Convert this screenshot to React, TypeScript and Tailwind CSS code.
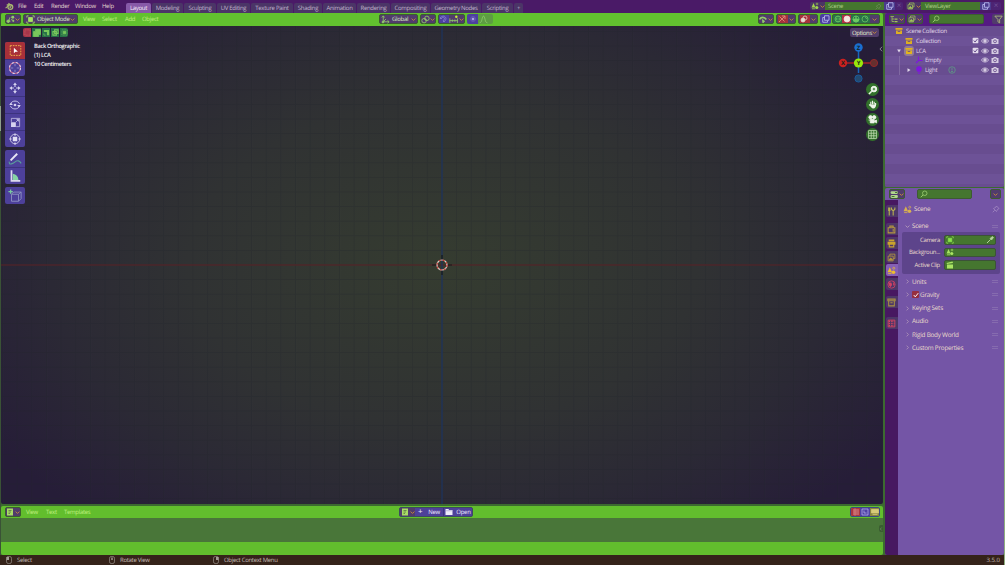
import { ReactNode } from 'react';
import clsx from 'clsx';

interface IconProps {
  className?: string;
}

function Svg({ className, children }: { className?: string; children: ReactNode }) {
  return (
    <svg viewBox="0 0 16 16" className={clsx('shrink-0', className ?? 'size-[9px]')} fill="none" stroke="currentColor" strokeWidth="1.5">
      {children}
    </svg>
  );
}

const Chevron = ({ className = 'size-[5px] text-[#c58a3a]' }: IconProps) => (
  <Svg className={className}><path d="M2 5l6 6 6-6" strokeWidth="3" /></Svg>
);

const ChevronRight = ({ className = 'size-[5px] text-[#b39abb]' }: IconProps) => (
  <Svg className={className}><path d="M5 2l6 6-6 6" strokeWidth="2.5" /></Svg>
);

const BlenderLogo = () => (
  <Svg className="size-[9px] text-[#a8b870]">
    <path d="M1 11l7-6H3M6 2l7 5.5" strokeWidth="2" />
    <circle cx="9.5" cy="9" r="4.3" strokeWidth="2.2" />
    <circle cx="9.5" cy="9" r="1.2" fill="currentColor" />
  </Svg>
);

const SceneIcon = ({ className }: IconProps) => (
  <Svg className={className}>
    <path d="M5 2l4 9H1z" fill="currentColor" stroke="none" />
    <circle cx="11.5" cy="11" r="3.2" fill="currentColor" stroke="none" />
    <path d="M2 13.5h6" />
    <circle cx="12" cy="4" r="1.8" strokeWidth="1.2" />
  </Svg>
);

const LayersIcon = ({ className }: IconProps) => (
  <Svg className={className}>
    <path d="M5 5V2h9v8h-3" />
    <path d="M2 5.5h9V14H2z" />
    <path d="M3.5 12.5l3-4 3.5 4z" fill="currentColor" />
  </Svg>
);

const CopyIcon = ({ className = 'size-[8px] text-[#b5b5ec]' }: IconProps) => (
  <Svg className={className}><path d="M5 1.5h9v9H5zM5 5H1.5v9.5H11V11" strokeWidth="1.8" /></Svg>
);

const PinIcon = ({ className }: IconProps) => (
  <Svg className={className}><path d="M9 2l5 5-2 1-2 3-1 2-6-6 2-1 3-2zM5.500 10.500L1.500 14.500" /></Svg>
);

const SearchIcon = ({ className = 'size-[8px] text-[#93c56b]' }: IconProps) => (
  <Svg className={className}><circle cx="9.5" cy="6.500" r="4.500" strokeWidth="1.8" /><path d="M6 10l-4.500 4.500" strokeWidth="2" /></Svg>
);

const EditorIcon = ({ className = 'size-[9px] text-[#94cb6b]' }: IconProps) => (
  <Svg className={className}>
    <path d="M1 11h7M4 14l3-10M9 8l5 2" />
    <circle cx="4" cy="11" r="2.200" fill="currentColor" />
    <circle cx="12" cy="4" r="2.600" fill="currentColor" stroke="none" />
    <circle cx="13" cy="10.500" r="1.200" fill="currentColor" />
  </Svg>
);

const ObjectIcon = ({ className = 'size-[9px] text-[#a9e463]' }: IconProps) => (
  <Svg className={className}>
    <path d="M4.500 4.500h7v7h-7z" fill="currentColor" />
    <path d="M1.500 4.500v-3h3M11.500 1.500h3v3M14.500 11.500v3h-3M4.500 14.500h-3v-3" />
  </Svg>
);

const AxesIcon = () => (
  <Svg className="size-[9px] text-[#94cb6b]">
    <path d="M4 2v10h10M4 12l5-5M1.500 4.500L4 1.500l2.500 3M11.500 9.500L14.500 12l-3 2.500" />
    <circle cx="3.500" cy="12.500" r="1.600" fill="currentColor" />
  </Svg>
);

const PivotIcon = () => (
  <Svg className="size-[9px] text-[#94cb6b]">
    <circle cx="5.500" cy="10" r="4" /><circle cx="10.500" cy="6" r="4" /><circle cx="8" cy="8" r="1" fill="currentColor" />
  </Svg>
);

const MagnetIcon = () => (
  <Svg className="size-[8px] text-[#8f8ad8]">
    <path d="M2 6l4-3c5-3 10 3 7 7l-3 4-2-2 2.500-3.500c1.500-3-1-5-3.500-3.500L4 8z" />
  </Svg>
);

const SnapIcon = () => (
  <Svg className="size-[9px] text-[#94cb6b]">
    <path d="M1.500 6v8M6 8v4M10.500 8v4M15 6v8M1 10h14" /><circle cx="13" cy="3" r="2.200" fill="#c9ea3e" stroke="none" />
  </Svg>
);

const EyeIcon = ({ className = 'size-[8px] text-[#d6cbe2]' }: IconProps) => (
  <Svg className={className}>
    <path d="M.8 8C4 2.500 12 2.500 15.200 8 12 13.500 4 13.500.8 8z" strokeWidth="1.600" /><circle cx="8" cy="8" r="2.700" fill="currentColor" />
  </Svg>
);

const CameraIcon = ({ className = 'size-[8px] text-[#d6cbe2]' }: IconProps) => (
  <Svg className={className}>
    <path d="M1 4h3.500l1-2h5l1 2H15v10H1z" fill="currentColor" stroke="none" />
    <circle cx="8" cy="8.700" r="2.900" stroke="#5a3f80" />
  </Svg>
);

const CheckIcon = ({ className = 'size-[7px] text-[#e2d9ec]' }: IconProps) => (
  <Svg className={className}>
    <rect x="1.500" y="1.500" width="13" height="13" rx="2" fill="currentColor" stroke="none" />
    <path d="M4 8l3 3.500 5.500-7" stroke="#5c4386" strokeWidth="2" />
  </Svg>
);

const BoxIcon = ({ className }: IconProps) => (
  <Svg className={className}>
    <path d="M1 2h14v3.500H1zM2 7h12v7H2z" fill="currentColor" stroke="none" /><path d="M5.500 9h5" stroke="#5c4386" />
  </Svg>
);

const TextIcon = () => (
  <Svg className="size-[8px] text-[#a9dc66]">
    <path d="M2 1h12v14H2z" fill="currentColor" stroke="none" /><path d="M5 5h6M5 8h5M5 11h3" stroke="#55703f" />
  </Svg>
);

const SphereIcon = ({ className = 'size-[8px]', fill = 'none', wire = false }: IconProps & { fill?: string; wire?: boolean }) => (
  <Svg className={className}>
    <circle cx="8" cy="8" r="6" fill={fill} />
    {wire && <path d="M2 8h12M8 2c-4 4-4 8 0 12M8 2c4 4 4 8 0 12" strokeWidth="1.200" />}
  </Svg>
);

const MouseIcon = ({ side }: { side: 'left' | 'middle' | 'right' }) => (
  <Svg className="size-[8px] text-[#a39b94]">
    <rect x="3" y="1" width="10" height="14" rx="3.500" strokeWidth="1.300" />
    {side === 'left' && <path d="M3 2h5v6H3z" fill="currentColor" stroke="none" />}
    {side === 'middle' && <path d="M8 3v5" strokeWidth="3" />}
    {side === 'right' && <path d="M8 2h5v6H8z" fill="currentColor" stroke="none" />}
  </Svg>
);

const btn = 'flex shrink-0 items-center justify-around h-[10px] rounded-[2px] bg-[#513c6c] border border-[#3d5b31]';
const green = 'flex shrink-0 items-center bg-[#45762f] text-[#b1d08a]';

const tabs = [
  { name: 'Layout', width: 'w-[26px]' },
  { name: 'Modeling', width: 'w-[32px]' },
  { name: 'Sculpting', width: 'w-[33px]' },
  { name: 'UV Editing', width: 'w-[34px]' },
  { name: 'Texture Paint', width: 'w-[43px]' },
  { name: 'Shading', width: 'w-[29px]' },
  { name: 'Animation', width: 'w-[34px]' },
  { name: 'Rendering', width: 'w-[34px]' },
  { name: 'Compositing', width: 'w-[40px]' },
  { name: 'Geometry Nodes', width: 'w-[51px]' },
  { name: 'Scripting', width: 'w-[32px]' },
  { name: '+', width: 'w-[10px]' },
];

function TopBar() {
  return (
    <div className="flex h-[13px] items-center bg-[#4a1a67] pl-[5px] text-[#d2c6d8]">
      <div className="mb-px"><BlenderLogo /></div>
      <div className="mb-px ml-[4px] flex w-[108px] text-[#e2d6cf]">
        <span className="w-[16px]">File</span>
        <span className="w-[17px]">Edit</span>
        <span className="w-[24px]">Render</span>
        <span className="w-[27px]">Window</span>
        <span>Help</span>
      </div>
      <div className="flex items-end self-end">
        {tabs.map((tab, i) => (
          <div key={tab.name} className={clsx('h-[10px] pr-px', tab.width)}>
            <div className={clsx('flex h-full items-center justify-center rounded-t-[2px]', i === 0 ? 'bg-[#875aa8] text-[#f6f0fa]' : 'bg-[#4b3567] text-[#c2b5cd]')}>
              {tab.name}
            </div>
          </div>
        ))}
      </div>
      <div className="mb-px ml-auto mr-[3px] flex h-[8px] items-center">
        <div className="flex h-full w-[15px] items-center justify-around rounded-l-[2px] bg-[#4b3565]">
          <SceneIcon className="size-[8px] text-[#a2d64e]" /><Chevron />
        </div>
        <div className={clsx(green, 'h-full w-[59px] justify-between pl-[3px] pr-[2px]')}>Scene <PinIcon className="size-[7px] text-[#71905b]" /></div>
        <div className="flex h-full w-[11px] items-center justify-center bg-[#4a3b8e]"><CopyIcon /></div>
        <div className="flex h-full w-[8px] items-center justify-center rounded-r-[2px] bg-[#4c2473] text-[8px] text-[#725398]">×</div>
        <div className="ml-[3px] flex h-full w-[15px] items-center justify-around rounded-l-[2px] bg-[#4b3565]">
          <LayersIcon className="size-[8px] text-[#a2c65a]" /><Chevron />
        </div>
        <div className={clsx(green, 'h-full w-[59px] pl-[4px]')}>ViewLayer</div>
        <div className="flex h-full w-[11px] items-center justify-center bg-[#4a3b8e]"><CopyIcon /></div>
        <div className="flex h-full w-[10px] items-center justify-center rounded-r-[2px] bg-[#4c2473] text-[8px] text-[#725398]">×</div>
      </div>
    </div>
  );
}

function ViewportHeader() {
  return (
    <div className="flex h-[13px] items-center rounded-t-[2px] bg-[#62c12f] pb-px pl-[4px] text-[#c0f080]">
      <div className={clsx(btn, 'w-[16px]')}><EditorIcon /><Chevron /></div>
      <div className={clsx(btn, 'ml-[2px] w-[55px] px-[2px] text-[#dcebc5]')}>
        <ObjectIcon /><span className="ml-[2px] mr-auto">Object Mode</span><Chevron />
      </div>
      <span className="ml-[5px] w-[19px]">View</span>
      <span className="w-[23px]">Select</span>
      <span className="w-[17px]">Add</span>
      <span className="w-[237px]">Object</span>
      <div className={clsx(btn, 'w-[39px] px-px text-[#dcebc5]')}>
        <AxesIcon /><span className="ml-[2px] mr-auto">Global</span><Chevron />
      </div>
      <div className={clsx(btn, 'ml-[2px] w-[16px]')}><PivotIcon /><Chevron /></div>
      <div className={clsx(btn, 'ml-[2px] w-[27px] overflow-hidden')}>
        <div className="flex h-full w-[10px] items-center bg-[#4d40a0]"><MagnetIcon /></div>
        <SnapIcon /><Chevron />
      </div>
      <div className="ml-[2px] flex h-[10px] w-[26px] items-center overflow-hidden rounded-[2px] bg-[#5d9d43]">
        <div className="flex h-full w-[11px] items-center justify-center bg-[#4d40a0] text-[#b4b0ee]">
          <Svg className="size-[8px]"><circle cx="8" cy="8" r="5" strokeOpacity=".3" /><circle cx="8" cy="8" r="2" fill="currentColor" /></Svg>
        </div>
        <Svg className="ml-px size-[9px] text-[#8fcf6c]"><path d="M1 14c5 0 4-12 7-12s2 12 7 12" /></Svg>
      </div>
      <div className={clsx(btn, 'ml-auto w-[16px]')}>
        <Svg className="size-[9px] text-[#94cb6b]"><path d="M1 8c2-5 9-5 12 0" strokeWidth="3" /><path d="M6 8l1 6 3-3z" fill="currentColor" /></Svg><Chevron />
      </div>
      <div className={clsx(btn, 'ml-[2px] w-[20px] overflow-hidden')}>
        <div className="flex h-full w-[10px] items-center bg-[#a7323b] text-[#e9a58b]">
          <Svg className="size-[8px]"><path d="M2 14L13 3M8 2h6v6M3 3l10 10" /></Svg>
        </div><Chevron />
      </div>
      <div className={clsx(btn, 'ml-[2px] w-[20px] overflow-hidden')}>
        <div className="flex h-full w-[10px] items-center bg-[#a7323b] text-[#e7dcd2]">
          <Svg className="size-[8px]"><circle cx="6" cy="10" r="4" fill="currentColor" /><circle cx="10" cy="6" r="4" /></Svg>
        </div><Chevron />
      </div>
      <div className="ml-[2px] flex h-[10px] w-[11px] items-center justify-center rounded-[2px] bg-[#4a3da0]"><CopyIcon /></div>
      <div className="ml-px mr-[3px] flex h-[10px] overflow-hidden rounded-[2px] border border-[#3d5b31] bg-[#287348] text-[#6ccb63]">
        <div className="flex w-[9px] items-center justify-center"><SphereIcon wire /></div>
        <div className="flex w-[9px] items-center justify-center bg-[#b23345] text-[#f2e6e0]"><SphereIcon fill="currentColor" /></div>
        <div className="flex w-[9px] items-center justify-center"><Svg className="size-[8px]"><circle cx="8" cy="8" r="6" /><path d="M8 2v6h6A6 6 0 112 8h6z" fill="currentColor" /></Svg></div>
        <div className="flex w-[10px] items-center justify-center"><Svg className="size-[8px]"><circle cx="8" cy="8" r="6" /><path d="M8 4a4 4 0 013 4" /></Svg></div>
        <div className="flex w-[9px] items-center justify-center bg-[#513c6c]"><Chevron /></div>
      </div>
    </div>
  );
}

const toolGroups: ReactNode[][] = [
  [
    <Svg className="size-[13px] text-[#eeb04a]"><rect x="1.500" y="2" width="13" height="12" strokeDasharray="2 1.200" strokeWidth="1.200" /><path d="M6 4.500v7l2-2h3z" fill="#fff" stroke="none" /></Svg>,
    <Svg className="size-[14px] text-[#d7d3f0]"><circle cx="8" cy="8" r="6.300" stroke="#cf6788" strokeWidth="1.200" /><circle cx="8" cy="8" r="6.300" strokeDasharray="2.500 2.500" strokeWidth="1.200" /><path d="M8 3v3M8 10v3M3 8h3M10 8h3" strokeWidth=".9" strokeOpacity=".6" /></Svg>,
  ],
  [
    <Svg className="size-[12px] text-[#d7d3f0]"><path d="M8 .5L5.500 4h5zM8 15.500L5.500 12h5zM.5 8L4 5.500v5zM15.500 8L12 5.500v5z" fill="currentColor" stroke="none" /><path d="M8 4v2.500M8 9.500V12M4 8h2.500M9.500 8H12" /></Svg>,
    <Svg className="size-[12px] text-[#d7d3f0]"><path d="M2 6.500C4 1.500 12 1.500 14 6.500M2 9.500c2 5 10 5 12 0" strokeWidth="1.200" /><path d="M.2 8h5L2.700 5zM15.800 8h-5l2.500 3z" fill="currentColor" stroke="none" /><circle cx="8" cy="8" r="1.800" fill="currentColor" stroke="none" /></Svg>,
    <Svg className="size-[11px] text-[#d7d3f0]"><path d="M2 7V2h12v12H9" strokeWidth="1" /><path d="M1.500 7.500h7v7h-7z" fill="currentColor" stroke="none" /><path d="M9 7l3-3M9.500 3.500h3v3" strokeWidth="1.200" /></Svg>,
    <Svg className="size-[12px] text-[#e2dff5]"><circle cx="8" cy="8" r="6.300" strokeWidth="1.300" strokeOpacity=".8" /><path d="M5 5h6v6H5z" fill="currentColor" stroke="none" /><path d="M8 .5v3M8 12.500v3M.5 8h3M12.500 8h3" /></Svg>,
  ],
  [
    <Svg className="size-[14px] text-[#e9e6f6]"><path d="M3 9.500L10.500 2" strokeWidth="2.200" /><path d="M1.500 11c-1 5 5 2 7 0s5-1 6.500 2" stroke="#5a9d9b" strokeWidth="1.300" /></Svg>,
    <Svg className="size-[14px] text-[#dcd9ee]"><path d="M4 1.500v12h10" strokeWidth="2" /><path d="M5.500 5.500c4 1 6 3 6.500 7H5.500z" fill="#86d4a4" stroke="none" /></Svg>,
  ],
  [
    <Svg className="size-[14px] text-[#8f92c4]"><path d="M4 6h8v8H4zM4 6l2.500-2.500H15V11l-3 3M12 6l3-2.500" strokeWidth="1" /><path d="M3 .5v5M.5 3h5" stroke="#7ac8a0" /></Svg>,
  ],
];

function NavigationGizmo() {
  return (
    <svg width="42" height="42" viewBox="838 42 42 42" className="absolute left-[837px] top-[16px] font-['Open_Sans',sans-serif] text-[6px] font-bold tracking-normal">
      <path d="M858.500 48v25" stroke="#1866b8" strokeWidth="1.500" />
      <path d="M843 63h31" stroke="#aa2027" strokeWidth="1.500" />
      <circle cx="874" cy="63" r="3.600" fill="#65302f" stroke="#93272b" />
      <circle cx="858.500" cy="78.500" r="3.600" fill="#244a70" stroke="#1a5b9c" />
      <circle cx="858.500" cy="47.500" r="4.200" fill="#1a6fd0" />
      <circle cx="843" cy="63" r="4.200" fill="#cc2020" />
      <circle cx="858.500" cy="63" r="4.600" fill="#98e80c" />
      <g textAnchor="middle" fill="#14221c">
        <text x="858.500" y="49.600">Z</text>
        <text x="843" y="65.200">X</text>
        <text x="858.500" y="65.200">Y</text>
      </g>
    </svg>
  );
}

const navButtons: ReactNode[] = [
  <Svg className="size-[10px] text-[#eef4ea]"><circle cx="9.500" cy="6.500" r="4.500" fill="currentColor" /><path d="M6 10l-4.500 4.500" strokeWidth="2.500" /><path d="M7.500 6.500h4M9.500 4.500v4" stroke="#32702b" /></Svg>,
  <Svg className="size-[9px] text-[#eef4ea]"><path d="M5 9V3M8 8V1.500M11 8V3M13.500 9V5.500M2 8l3 3" strokeWidth="2" /><path d="M4 8h10.500c0 4-2 7-5 7-3.500 0-4-3-5.500-5z" fill="currentColor" stroke="none" /></Svg>,
  <Svg className="size-[9px] text-[#eef4ea]"><circle cx="4.500" cy="4" r="3" fill="currentColor" /><circle cx="11" cy="4" r="3" fill="currentColor" /><path d="M4 8h7v6H4zM11 11l4-2v5zM1 9h3" fill="currentColor" /></Svg>,
  <Svg className="size-[9px] text-[#c8e2bb]"><path d="M1 1h14v14H1zM1 5.700h14M1 10.300h14M5.700 1v14M10.300 1v14" strokeWidth="1.300" /></Svg>,
];

function Viewport() {
  return (
    <div className="relative h-[478px] overflow-hidden rounded-b-[2px] bg-[radial-gradient(ellipse_60%_70%_at_50%_50%,#353c30_0%,#303233_48%,#2b2935_74%,#261d38_100%)]">
      <svg className="absolute inset-0" width="882" height="478">
        <defs>
          <pattern id="grid" x="440.500" y="238.500" width="14.650" height="14.600" patternUnits="userSpaceOnUse">
            <path d="M0 .5h14.650M.5 0v14.600" stroke="#20242a" strokeOpacity=".28" fill="none" />
          </pattern>
        </defs>
        <rect width="882" height="478" fill="url(#grid)" />
        <path d="M0 239h882" stroke="#5c2226" strokeWidth="1.200" />
        <path d="M441 0v478" stroke="#1e3560" strokeWidth="1.200" />
        <path d="M431 239h6M445 239h6M441 229v6M441 243v6" stroke="#16191a" strokeWidth="1.200" />
        <circle cx="441" cy="239" r="5" fill="none" stroke="#d9d0c8" strokeWidth="1.200" />
        <circle cx="441" cy="239" r="5" fill="none" stroke="#c73a36" strokeWidth="1.200" strokeDasharray="2 1.930" />
      </svg>
      <div className="relative flex items-start pt-[2px]">
        <div className="ml-[22px] flex h-[9px] gap-px overflow-hidden rounded-[2px] text-[#79c85c]">
          <div className="flex w-[8px] items-center justify-center bg-[#a8354a]"><Svg className="size-[7px] text-[#d4716c]"><path d="M2 2h12v12H2z" strokeDasharray="2 2" /></Svg></div>
          <div className="flex w-[9px] items-center justify-center bg-[#277048]"><Svg className="size-[8px]"><path d="M5 1h10v10h-4v4H1V5h4z" fill="currentColor" /></Svg></div>
          <div className="flex w-[8px] items-center justify-center bg-[#277048]"><Svg className="size-[7px]"><path d="M2 2h12v12h-5V7H2z" fill="currentColor" stroke="none" /><path d="M2 10v4h4" /></Svg></div>
          <div className="flex w-[8px] items-center justify-center bg-[#277048]"><Svg className="size-[7px]"><path d="M6 2h8v8H6zM2 6h8v8H2z" strokeWidth="2.500" /></Svg></div>
          <div className="flex w-[8px] items-center justify-center bg-[#277048]"><Svg className="size-[7px]"><path d="M5 5h6v6H5z" fill="currentColor" /><path d="M2 2h12v12H2z" strokeDasharray="2 2" /></Svg></div>
        </div>
        <div className="ml-auto mr-[4px] flex h-[9px] w-[29px] items-center justify-between rounded-[2px] bg-[#523d6a] px-[2px] text-[#e2edcd]">Options <Chevron /></div>
      </div>
      <div className="relative flex">
        <div className="ml-[4px] mt-[5px] flex w-[20px] flex-col gap-[3px]">
          {toolGroups.map((group, g) => (
            <div key={g} className="overflow-hidden rounded-[2px] bg-[#4d409b]">
              {group.map((icon, i) => (
                <div key={i} className={clsx('flex h-[17px] items-center justify-center', g === 0 && i === 0 && 'bg-[#a83039]', i > 0 && 'border-t border-[#3c337e]')}>{icon}</div>
              ))}
            </div>
          ))}
        </div>
        <div className="ml-[9px] mt-[5px] text-[5.800px] font-semibold leading-[8.900px] tracking-[-0.39px] text-[#f1f1f4]">
          <div>Back Orthographic</div>
          <div>(1) LCA</div>
          <div>10 Centimeters</div>
        </div>
      </div>
      <NavigationGizmo />
      <ChevronRight className="absolute left-[877px] top-[20px] size-[6px] rotate-180 text-[#8e8a96]" />
      <div className="absolute left-[865px] top-[57px] flex flex-col gap-[2px]">
        {navButtons.map((icon, i) => (
          <div key={i} className="flex size-[13px] items-center justify-center rounded-full bg-[#32702b]">{icon}</div>
        ))}
      </div>
    </div>
  );
}

function TextEditor() {
  return (
    <div className="mt-[2px] h-[49px] overflow-hidden rounded-[2px] bg-[#62be2d] text-[#c0f080]">
      <div className="flex h-[12px] items-center pl-[4px]">
        <div className={clsx(btn, 'w-[16px]')}><TextIcon /><Chevron /></div>
        <span className="ml-[5px] w-[20px]">View</span>
        <span className="w-[18px]">Text</span>
        <span className="w-[335px]">Templates</span>
        <div className="flex h-[10px] items-center overflow-hidden rounded-[2px] border border-[#3e4a60] bg-[#4e419a] text-[#eeebfa]">
          <div className="flex h-full w-[15px] items-center justify-around bg-[#513c6c]"><TextIcon /><Chevron /></div>
          <div className="flex h-full w-[29px] items-center justify-around border-r border-[#3c337e]"><span className="text-[8px]">+</span><span>New</span></div>
          <div className="flex w-[28px] items-center justify-around">
            <Svg className="size-[8px]"><path d="M1 2h6l1 2h7v10H1z" fill="currentColor" stroke="none" /><path d="M1 5.500h14" stroke="#8a80c0" strokeWidth="1" /></Svg>Open
          </div>
        </div>
        <div className="ml-auto mr-[3px] flex h-[10px] overflow-hidden rounded-[2px] border border-[#3c4a80]">
          <div className="flex w-[9px] items-center justify-center bg-[#ab3540] text-[#e9aaa4]"><Svg className="size-[8px]"><path d="M2 4h3M7 4h7M2 8h3M7 8h7M2 12h3M7 12h7M6 1v14" /></Svg></div>
          <div className="flex w-[10px] items-center justify-center bg-[#4e41a4] text-[#b8b2ec]"><Svg className="size-[8px]"><path d="M2 2h12v12H2zM6 5v5h5" /></Svg></div>
          <div className="flex w-[9px] items-center justify-center bg-[#8a8440] text-[#d8cb78]"><Svg className="size-[8px]"><path d="M1 3h14v7H1z" fill="currentColor" /><path d="M3 13h10" /></Svg></div>
        </div>
      </div>
      <div className="flex h-[24px] items-start justify-end bg-[#497639]">
        <div className="mt-[7px] flex h-[7px] w-[4px] items-center rounded-l-[2px] bg-[#3a5d31]"><ChevronRight className="size-[4px] rotate-180 text-[#79946d]" /></div>
      </div>
    </div>
  );
}

function RowToggles({ check = false }: { check?: boolean }) {
  return (
    <div className="ml-auto mr-[5px] flex items-center gap-[2px]">
      {check && <CheckIcon />}
      <EyeIcon />
      <CameraIcon />
    </div>
  );
}

function Outliner() {
  return (
    <div className="h-[174px] overflow-hidden rounded-[2px] bg-[#684d90] text-[#e0d6e9]">
      <div className="flex h-[13px] items-center bg-[#551a83] pb-px pl-[4px]">
        <div className={clsx(btn, 'w-[16px]')}>
          <Svg className="size-[8px] text-[#a2c65a]"><path d="M1 3h7M4 3v10h4M4 8h4" /><path d="M9 8h6M9 13h6" strokeWidth="2.500" /></Svg><Chevron />
        </div>
        <div className={clsx(btn, 'ml-[2px] w-[16px]')}><LayersIcon className="size-[8px] text-[#a2c65a]" /><Chevron /></div>
        <div className={clsx(green, 'ml-[6px] h-[10px] w-[55px] rounded-[2px] border border-[#3d5b31] pl-[2px]')}><SearchIcon /></div>
        <div className="ml-auto flex h-[10px] w-[12px] items-center justify-center rounded-l-[2px] bg-[#513c6c]">
          <Svg className="size-[9px] text-[#b3bd7e]"><path d="M1.500 2h13L10 8v6l-3-2V8z" /></Svg>
        </div>
      </div>
      <div className="h-full bg-[repeating-linear-gradient(#684d90_0_9.85px,#6d5297_9.85px_19.700px)]">
        <div className="flex h-[9.85px] items-center pl-[10px]">
          <BoxIcon className="size-[8px] text-[#dcae23]" /><span className="ml-[3px]">Scene Collection</span>
        </div>
        <div className="flex h-[9.85px] items-center pl-[20px]">
          <BoxIcon className="size-[8px] text-[#dcae23]" /><span className="ml-[3px]">Collection</span><RowToggles check />
        </div>
        <div className="flex h-[9.85px] items-center pl-[11px]">
          <Svg className="size-[6px]"><path d="M3 4h10l-5 8z" fill="currentColor" stroke="none" /></Svg>
          <div className="ml-[2px] flex size-[10px] items-center justify-center rounded-[3px] bg-[#927a94]"><BoxIcon className="size-[8px] text-[#e2b41c]" /></div>
          <span className="ml-[2px]">LCA</span><RowToggles check />
        </div>
        <div className="flex h-[9.85px] items-center pl-[14px]">
          <div className="h-full w-px bg-[#8069a2]" />
          <Svg className="ml-[15px] size-[8px] text-[#7d18dc]"><path d="M7 1v8h8M7 9l-5 5" strokeWidth="2.200" /></Svg>
          <span className="ml-[2px]">Empty</span><RowToggles />
        </div>
        <div className="flex h-[9.85px] items-center pl-[14px]">
          <div className="h-full w-px bg-[#8069a2]" />
          <Svg className="ml-[6px] size-[6px]"><path d="M4 3v10l8-5z" fill="currentColor" stroke="none" /></Svg>
          <Svg className="ml-[3px] size-[8px] text-[#7d18dc]"><circle cx="8" cy="6" r="5" fill="currentColor" /><path d="M5 12h6M6 15h4" /></Svg>
          <span className="ml-[2px]">Light</span>
          <Svg className="ml-[11px] size-[8px] text-[#5da184]"><circle cx="8" cy="8" r="6.500" /><path d="M8 4v5M6 11h4" /></Svg>
          <RowToggles />
        </div>
      </div>
    </div>
  );
}

const propertyTabs: { icon: ReactNode; gap: string; color: string }[] = [
  { gap: 'mt-[5px]', color: 'text-[#b6ad51]', icon: <Svg><path d="M4 7v8M11 15V8M8 1v3l3 3 3-3V1" strokeWidth="2" /><path d="M2 1h4v6H2z" fill="currentColor" stroke="none" /></Svg> },
  { gap: 'mt-[6px]', color: 'text-[#b6983f]', icon: <Svg><path d="M2 5h12v9H2zM5 5V2h6v3M11 7v5" strokeWidth="1.800" /></Svg> },
  { gap: 'mt-[2px]', color: 'text-[#c9a32e]', icon: <Svg><path d="M3 1h10v3H3zM1 5h14v5H1z" fill="currentColor" stroke="none" /><path d="M4 8v6h8V8" strokeWidth="2" /></Svg> },
  { gap: 'mt-[2px]', color: 'text-[#b6983f]', icon: <LayersIcon className="size-[9px]" /> },
  { gap: 'mt-[1px]', color: 'text-[#edbd2e]', icon: <SceneIcon className="size-[9px]" /> },
  { gap: 'mt-[2px]', color: 'text-[#d04064]', icon: <Svg><circle cx="8" cy="8" r="6.500" /><path d="M3 4l5 1 1 4-3 4-3-4zM11 3l3 5-3 2z" fill="currentColor" stroke="none" /></Svg> },
  { gap: 'mt-[6px]', color: 'text-[#aa9243]', icon: <Svg><path d="M1.500 2h13v3h-13zM3 5v9h10V5M6 8.500h4" strokeWidth="1.800" /></Svg> },
  { gap: 'mt-[9px]', color: 'text-[#d84560]', icon: <Svg><path d="M2 2h12v12H2z" /><path d="M3 4h10M3 8h10M3 12h10" strokeWidth="2.500" strokeDasharray="2.500 2" /></Svg> },
];

const Grip = () => (
  <div className="ml-auto mr-[6px] h-[3px] w-[6px] border-y border-[#866baf]" />
);

function PropertiesEditor() {
  return (
    <div className="mt-px flex flex-1 flex-col overflow-hidden rounded-[2px] bg-[#7455a6] text-[#eadccb]">
      <div className="flex h-[12px] items-center pl-[4px]">
        <div className={clsx(btn, 'w-[16px]')}>
          <Svg className="size-[9px] text-[#b1d68d]"><rect x="1" y="2" width="13" height="5" rx="2" fill="currentColor" stroke="none" /><rect x="1" y="9" width="13" height="5" rx="2" fill="currentColor" stroke="none" /><path d="M9 4.500h4M3 11.500h5" stroke="#467235" strokeWidth="2" /></Svg><Chevron />
        </div>
        <div className={clsx(green, 'ml-[12px] h-[10px] w-[55px] rounded-[2px] border border-[#3d5b31] pl-[2px]')}><SearchIcon /></div>
        <div className={clsx(btn, 'ml-auto mr-[3px] w-[11px]')}><Chevron /></div>
      </div>
      <div className="flex flex-1">
        <div className="flex w-[13px] flex-col items-end bg-[#471861]">
          {propertyTabs.map((tab, i) => (
            <div key={i} className={clsx('flex h-[12px] w-[12px] shrink-0 items-center justify-center rounded-l-[2px] pr-px', tab.gap, tab.color, i === 4 ? 'bg-[#8560b5]' : 'bg-[#4d3768]')}>{tab.icon}</div>
          ))}
        </div>
        <div className="flex-1 text-[6.400px] tracking-[-0.26px]">
          <div className="mt-[4px] flex h-[10px] items-center pl-[5px]">
            <SceneIcon className="size-[9px] text-[#d9b04f]" /><span className="ml-[2px]">Scene</span>
            <PinIcon className="ml-auto mr-[4px] size-[8px] text-[#a58cc4]" />
          </div>
          <div className="mt-[7px] flex h-[10px] items-center pl-[7px]">
            <Chevron className="size-[5px] text-[#b39abb]" /><span className="ml-[2px]">Scene</span><Grip />
          </div>
          <div className="ml-[4px] mr-[4px] mt-px flex h-[42px] flex-col gap-[3px] rounded-[2px] bg-[#5d448b] pr-[4px] pt-[3px] text-[6px] tracking-[-0.3px]">
            <div className="flex h-[9.500px] items-center justify-end gap-[4px]">
              Camera
              <div className={clsx(green, 'h-full w-[52px] justify-between rounded-[2px] border border-[#3c5238] px-px')}>
                <ObjectIcon className="size-[8px] text-[#8be24c]" />
                <Svg className="size-[8px] text-[#b4d29c]"><path d="M2 14l7-7" strokeWidth="2" /><path d="M8 5l3 3 4-5-2-2z" fill="currentColor" /></Svg>
              </div>
            </div>
            <div className="flex h-[9.500px] items-center justify-end gap-[4px]">
              Backgroun...
              <div className={clsx(green, 'h-full w-[52px] rounded-[2px] border border-[#3c5238] pl-px')}><SceneIcon className="size-[8px] text-[#a9e463]" /></div>
            </div>
            <div className="flex h-[9.500px] items-center justify-end gap-[4px]">
              Active Clip
              <div className={clsx(green, 'h-full w-[52px] rounded-[2px] border border-[#3c5238] pl-px')}>
                <Svg className="size-[8px] text-[#a9e463]"><path d="M2 7h12v8H2zM1 4l12-3 1 3L2 6z" fill="currentColor" stroke="none" /></Svg>
              </div>
            </div>
          </div>
          <div className="mt-px">
            {['Units', 'Gravity', 'Keying Sets', 'Audio', 'Rigid Body World', 'Custom Properties'].map((name) => (
              <div key={name} className="flex h-[13.250px] items-center pl-[7px]">
                <ChevronRight />
                {name === 'Gravity' && (
                  <div className="ml-[2px] flex size-[7px] items-center justify-center rounded-[1px] bg-[#962e40] text-white"><Svg className="size-[6px]"><path d="M2 8l4 5 8-10" strokeWidth="2.500" /></Svg></div>
                )}
                <span className={name === 'Gravity' ? 'ml-px' : 'ml-[2px]'}>{name}</span>
                <Grip />
              </div>
            ))}
          </div>
        </div>
      </div>
    </div>
  );
}

function StatusBar() {
  return (
    <div className="flex h-[10px] items-center bg-[#35231a] pl-[5px] text-[#c6beb8]">
      <MouseIcon side="left" /><span className="ml-[4px] w-[91px]">Select</span>
      <MouseIcon side="middle" /><span className="ml-[4px] w-[92px]">Rotate View</span>
      <MouseIcon side="right" /><span className="ml-[4px]">Object Context Menu</span>
      <span className="ml-auto mr-[4px] tracking-normal">3.5.0</span>
    </div>
  );
}

export default function App() {
  return (
    <div className="flex h-[565px] w-[1005px] flex-col overflow-hidden whitespace-nowrap border-r border-[#8fae80] bg-[#3c6a30] font-['Open_Sans','Noto_Sans',sans-serif] text-[6px] font-medium leading-[8px] tracking-[-0.3px] [text-rendering:geometricPrecision]">
      <TopBar />
      <div className="flex h-[542px]">
        <div className="w-px bg-[#3a5236] pt-[93px]"><div className="h-[25px] bg-[#8fa08c]" /></div>
        <div className="w-[882px]">
          <ViewportHeader />
          <Viewport />
          <TextEditor />
        </div>
        <div className="ml-[2px] flex flex-1 flex-col">
          <Outliner />
          <PropertiesEditor />
        </div>
      </div>
      <StatusBar />
    </div>
  );
}
